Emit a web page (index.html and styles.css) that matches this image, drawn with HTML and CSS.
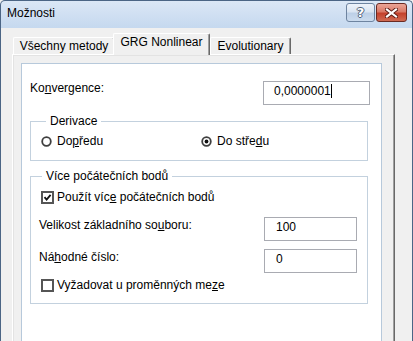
FILE: index.html
```html
<!DOCTYPE html>
<html lang="cs">
<head>
<meta charset="utf-8">
<title>Možnosti</title>
<link rel="stylesheet" href="styles.css">
</head>
<body>
<div class="window">
  <div class="titlebar">
    <span class="title">Možnosti</span>
    <div class="caption-btns">
      <div class="cbtn help"><span class="q">?</span></div>
      <div class="cbtn close">
        <svg width="13" height="10" viewBox="0 0 13 10">
          <path d="M2 1.5 L11 8.5 M11 1.5 L2 8.5" stroke="#5a1a12" stroke-width="4" stroke-linecap="square"/>
          <path d="M2 1.5 L11 8.5 M11 1.5 L2 8.5" stroke="#ffffff" stroke-width="2.2" stroke-linecap="square"/>
        </svg>
      </div>
    </div>
  </div>
  <div class="client">
    <div class="tabs">
      <div class="tab t1">Všechny metody</div>
      <div class="tab t2 active">GRG Nonlinear</div>
      <div class="tab t3">Evolutionary</div>
    </div>
    <div class="tabpage">
      <div class="panel">
        <div class="row konv">
          <span class="lbl">Ko<u>n</u>vergence:</span>
          <div class="input wide">0,0000001<span class="caret"></span></div>
        </div>
        <fieldset class="group g1">
          <legend>Derivace</legend>
          <div class="radios">
            <div class="radio">
              <svg width="11" height="11" viewBox="0 0 11 11"><circle cx="5.5" cy="5.5" r="4.3" fill="#fff" stroke="#3f3f3f" stroke-width="1.8"/></svg>
              <span>Do<u>p</u>ředu</span>
            </div>
            <div class="radio">
              <svg width="11" height="11" viewBox="0 0 11 11"><circle cx="5.5" cy="5.5" r="4.3" fill="#fff" stroke="#3f3f3f" stroke-width="1.8"/><circle cx="5.5" cy="5.5" r="1.9" fill="#111"/></svg>
              <span>Do stře<u>d</u>u</span>
            </div>
          </div>
        </fieldset>
        <fieldset class="group g2">
          <legend>Více počátečních bodů</legend>
          <div class="check first">
            <svg width="13" height="13" viewBox="0 0 13 13"><rect x="1" y="1" width="11" height="11" fill="#fff" stroke="#555" stroke-width="2"/><path d="M3.5 6.2 L5.6 8.6 L9.6 3.8" fill="none" stroke="#111" stroke-width="1.8"/></svg>
            <span>Použít víc<u>e</u> počátečních bodů</span>
          </div>
          <div class="row field f1">
            <span class="lbl">Velikost základního so<u>u</u>boru:</span>
            <div class="input narrow">100</div>
          </div>
          <div class="row field f2">
            <span class="lbl">Ná<u>h</u>odné číslo:</span>
            <div class="input narrow">0</div>
          </div>
          <div class="check last">
            <svg width="13" height="13" viewBox="0 0 13 13"><rect x="1" y="1" width="11" height="11" fill="#fff" stroke="#555" stroke-width="2"/></svg>
            <span>Vyžadovat u proměnných me<u>z</u>e</span>
          </div>
        </fieldset>
      </div>
    </div>
  </div>
</div>
</body>
</html>
```

FILE: styles.css
```css
html, body {
  margin: 0;
  padding: 0;
  overflow: hidden;
  background: #f0f0f0;
}

body {
  font-family: "Liberation Sans", Arial, sans-serif;
  font-size: 12px;
  line-height: 15px;
  color: #000;
}

.window {
  width: 413px;
  height: 440px;
  box-sizing: border-box;
  border: 1px solid #4b6585;
  border-bottom: none;
  border-radius: 5px 5px 0 0;
  background: linear-gradient(#dbe7f6 0px, #c6d9ef 26px, #c6d9ef 100%);
}

.titlebar {
  height: 27px;
  display: flex;
  align-items: flex-start;
}

.title {
  padding: 5px 0 0 6px;
  color: #000;
}

.caption-btns {
  margin-left: auto;
  margin-right: 5px;
  margin-top: 2px;
  display: flex;
  gap: 1px;
}

.cbtn {
  box-sizing: border-box;
  height: 19px;
  border-radius: 3px;
  display: flex;
  align-items: center;
  justify-content: center;
}

.help {
  width: 29px;
  border: 1px solid #6e84a0;
  background: linear-gradient(#eef3fa 0%, #dae5f2 45%, #bdd0e7 55%, #cbdbee 100%);
}

.help .q {
  font-family: "DejaVu Sans", sans-serif;
  font-weight: bold;
  font-size: 13px;
  color: #ffffff;
  text-shadow: 1px 0 #4f6079, -1px 0 #4f6079, 0 1px #4f6079, 0 -1px #4f6079;
}

.close {
  width: 31px;
  border: 1px solid #6a2a22;
  background: linear-gradient(#eba597 0%, #d97a68 45%, #c4412c 55%, #cf6a52 100%);
}

.client {
  background: #f0f0f0;
  margin: 0;
  height: 420px;
  padding-top: 5px;
}

.tabs {
  display: flex;
  align-items: flex-end;
  padding-left: 12px;
  height: 21px;
  position: relative;
  z-index: 1;
}

.tab {
  box-sizing: border-box;
  height: 17px;
  border-top: 1px solid #fff;
  border-left: 1px solid #fff;
  border-right: 1px solid #696969;
  box-shadow: inset -1px 0 #a0a0a0;
  border-radius: 2px 2px 0 0;
  background: #f0f0f0;
  text-align: center;
  line-height: 16px;
}

.t1 { width: 102px; }

.t2 {
  width: 97px;
  height: 22px;
  margin-left: -2px;
  margin-bottom: -1px;
  padding-top: 1px;
  line-height: 15px;
  position: relative;
  z-index: 2;
}

.t3 {
  width: 81px;
  margin-left: 0;
}

.tabpage {
  margin-left: 11px;
  width: 383px;
  box-sizing: border-box;
  height: 400px;
  border-top: 1px solid #fff;
  border-left: 1px solid #fff;
  border-right: 1px solid #696969;
  box-shadow: inset -1px 0 #a0a0a0, inset 1px 1px #e3e3e3;
  padding: 8px 12px 0 8px;
}

.panel {
  background: #fff;
  border: 1px solid #b7c9db;
  height: 360px;
  padding: 17px 11px 0 8px;
}

.row {
  display: flex;
  justify-content: space-between;
  align-items: flex-start;
}

.input {
  box-sizing: border-box;
  height: 24px;
  border: 1px solid #a9abb2;
  background: #fff;
  padding: 2px 0 0 10px;
  line-height: 15px;
  white-space: nowrap;
}

.wide { width: 107px; }

.narrow {
  width: 93px;
  padding-left: 11px;
}

.caret {
  display: inline-block;
  width: 1px;
  height: 14px;
  background: #000;
  vertical-align: -3px;
}

.group {
  margin: 0 2px 0 0;
  padding: 0 10px 0 10px;
  border: 1px solid #c3d1de;
  min-width: 0;
}

.g1 {
  margin-top: 9px;
  padding-bottom: 11px;
}

.g1 legend {
  margin-left: 5px;
  padding: 0 4px;
}

.g2 {
  margin-top: 8px;
  padding-bottom: 10px;
}

.g2 legend {
  padding: 0 4px;
  margin-left: 1px;
}

.radios {
  display: grid;
  grid-template-columns: 160px auto;
  margin-top: 5px;
}

.radio {
  display: flex;
  align-items: center;
  gap: 5px;
}

.radio svg { display: block; }

.check {
  display: flex;
  align-items: center;
  gap: 3px;
  height: 15px;
}

.check svg { display: block; }

.check.first { margin-top: 6px; }

.check.last { margin-top: 5px; }

.field .lbl {
  margin-top: 1px;
  margin-left: -2px;
}

.f1 { margin-top: 12px; }

.f2 { margin-top: 8px; }

u {
  text-decoration: underline;
  text-underline-offset: 1px;
}
```
